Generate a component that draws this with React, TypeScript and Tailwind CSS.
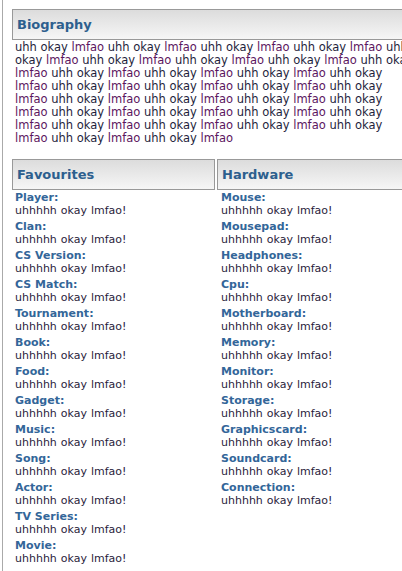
import React from 'react';

const favourites = [
  'Player', 'Clan', 'CS Version', 'CS Match', 'Tournament', 'Book', 'Food',
  'Gadget', 'Music', 'Song', 'Actor', 'TV Series', 'Movie',
];

const hardware = [
  'Mouse', 'Mousepad', 'Headphones', 'Cpu', 'Motherboard', 'Memory',
  'Monitor', 'Storage', 'Graphicscard', 'Soundcard', 'Connection',
];

// biography lines, broken where the reference breaks them
const bioLines = [
  'uhh okay lmfao uhh okay lmfao uhh okay lmfao uhh okay lmfao uhh okay lmfao uhh okay',
  'okay lmfao uhh okay lmfao uhh okay lmfao uhh okay lmfao uhh okay lmfao uhh okay lmfao',
  'lmfao uhh okay lmfao uhh okay lmfao uhh okay lmfao uhh okay',
  'lmfao uhh okay lmfao uhh okay lmfao uhh okay lmfao uhh okay',
  'lmfao uhh okay lmfao uhh okay lmfao uhh okay lmfao uhh okay',
  'lmfao uhh okay lmfao uhh okay lmfao uhh okay lmfao uhh okay',
  'lmfao uhh okay lmfao uhh okay lmfao uhh okay lmfao uhh okay',
  'lmfao uhh okay lmfao uhh okay lmfao',
];

function BioLine({ text }: { text: string }) {
  const words = text.split(' ');
  return (
    <div className="whitespace-nowrap h-[13px] leading-[13px]">
      {words.map((w, i) => (
        <span key={i} className={w === 'lmfao' ? 'text-[#5c1660]' : 'text-[#1e1e3c]'}>
          {w}
          {i < words.length - 1 ? ' ' : ''}
        </span>
      ))}
    </div>
  );
}

function BoxHeader({ title, className }: { title: string; className: string }) {
  return (
    <div
      className={`h-[31px] border border-[#999999] bg-gradient-to-b from-[#dcdcdc] to-[#f6f6f6] flex items-center pl-[4px] ${className}`}
    >
      <h2 className="text-[13px] font-bold text-[#2d5f8e]">{title}</h2>
    </div>
  );
}

function InfoList({ items, pad }: { items: string[]; pad: string }) {
  return (
    <dl className={`${pad} pt-[1px] flex flex-col gap-[3px] text-[11px] leading-[13px]`}>
      {items.map((label) => (
        <div key={label}>
          <dt className="font-bold text-[#336699]">{label}:</dt>
          <dd className="text-[#2a1d3c] [word-spacing:0.5px]">uhhhhh okay lmfao!</dd>
        </div>
      ))}
    </dl>
  );
}

export default function App() {
  return (
    <div
      className="w-[402px] h-[571px] overflow-hidden bg-white flex"
      style={{ fontFamily: '"DejaVu Sans", Verdana, sans-serif' }}
    >
      {/* parent frame edge */}
      <div className="w-[3px] shrink-0 border-r border-[#aaaaaa]" />

      <div className="pl-[9px] pt-[9px] shrink-0 w-[440px]">
        <section aria-labelledby="bio-title">
          <BoxHeader title="Biography" className="w-[430px]" />
          <div className="pl-[3px] pt-[1px] text-[11.5px]">
            {bioLines.map((l, i) => (
              <BioLine key={i} text={l} />
            ))}
          </div>
        </section>

        <div className="mt-[14px] flex gap-[2px]">
          <section className="w-[203px] shrink-0">
            <BoxHeader title="Favourites" className="w-[203px]" />
            <InfoList items={favourites} pad="pl-[3px]" />
          </section>
          <section className="w-[220px] shrink-0">
            <BoxHeader title="Hardware" className="w-[220px]" />
            <InfoList items={hardware} pad="pl-[4px]" />
          </section>
        </div>
      </div>
    </div>
  );
}
